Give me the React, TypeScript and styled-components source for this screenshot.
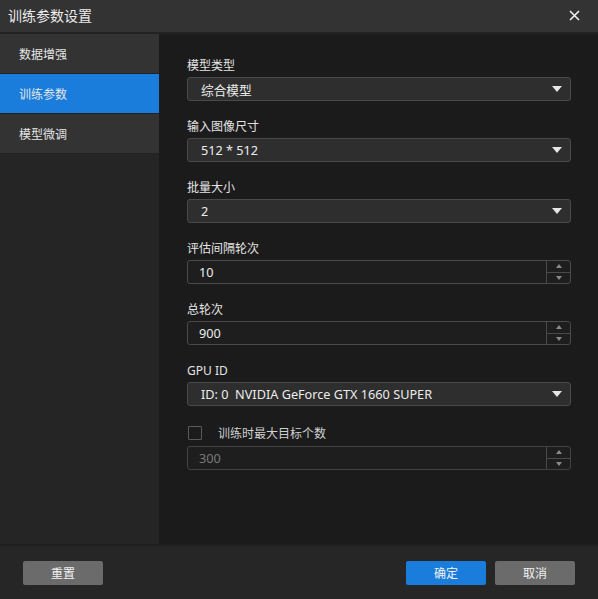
import React, { useState } from 'react';
import styled, { createGlobalStyle } from 'styled-components';

const GlobalStyle = createGlobalStyle`
  html, body {
    margin: 0;
    padding: 0;
    background: #1b1b1b;
  }
  * {
    box-sizing: border-box;
  }
`;

const Dialog = styled.div`
  width: 598px;
  height: 599px;
  display: flex;
  flex-direction: column;
  background: #1b1b1b;
  font-family: 'Noto Sans', 'Noto Sans CJK SC', sans-serif;
  color: #e2e2e2;
  overflow: hidden;
`;

const TitleBar = styled.div`
  height: 34px;
  flex-shrink: 0;
  display: flex;
  align-items: center;
  justify-content: space-between;
  padding: 0 18px 2px 8px;
  background: #333333;
  border-bottom: 2px solid #222222;
  font-size: 14px;
  color: #ececec;
`;

const CloseButton = styled.button`
  width: 12px;
  height: 12px;
  padding: 0;
  border: none;
  background: none;
  display: flex;
  align-items: center;
  justify-content: center;
  cursor: pointer;
`;

const Body = styled.div`
  flex: 1;
  display: flex;
  min-height: 0;
`;

const Sidebar = styled.div`
  width: 159px;
  flex-shrink: 0;
  display: flex;
  flex-direction: column;
  background: #252525;
`;

const NavItem = styled.div<{ $active?: boolean }>`
  height: 40px;
  display: flex;
  align-items: center;
  padding: 1px 0 0 19px;
  font-size: 12px;
  color: #e6e6e6;
  background: ${(p) => (p.$active ? '#1a7ddb' : '#333333')};
  border-bottom: 1px solid #222222;
  cursor: pointer;
`;

const Content = styled.div`
  flex: 1;
  display: flex;
  flex-direction: column;
  gap: 15px;
  padding: 21px 27px 0 28px;
`;

const Field = styled.div`
  display: flex;
  flex-direction: column;
  gap: 4px;
`;

const Label = styled.div`
  height: 18px;
  padding-top: 3px;
  line-height: 16px;
  font-size: 12px;
  color: #e4e4e4;
`;

const SelectBox = styled.div`
  height: 24px;
  display: flex;
  align-items: center;
  justify-content: space-between;
  padding: 0 8px 0 13px;
  background: #2e2e2e;
  border: 1px solid #4a4a4a;
  border-radius: 3px;
  font-size: 12.7px;
  color: #ececec;
  white-space: pre;
  cursor: pointer;
`;

const NumberBox = styled.div<{ $disabled?: boolean }>`
  height: 24px;
  display: flex;
  background: #1e1e1e;
  border: 1px solid ${(p) => (p.$disabled ? '#424242' : '#4a4a4a')};
  border-radius: 3px;
  font-size: 12.7px;
  color: ${(p) => (p.$disabled ? '#7a7a7a' : '#ececec')};
`;

const NumberValue = styled.div`
  flex: 1;
  display: flex;
  align-items: center;
  padding-left: 11px;
`;

const Spinner = styled.div`
  width: 24px;
  display: flex;
  flex-direction: column;
  border-left: 1px solid #4a4a4a;
`;

const SpinButton = styled.div<{ $down?: boolean }>`
  flex: 1;
  display: flex;
  align-items: center;
  justify-content: center;
  border-top: ${(p) => (p.$down ? '1px solid #4a4a4a' : 'none')};
`;

const CheckRow = styled.div`
  height: 18px;
  margin-top: 3px;
  display: flex;
  align-items: center;
  gap: 16px;
  padding-left: 1px;
  font-size: 12px;
  color: #d0d0d0;
`;

const CheckBox = styled.div`
  width: 14px;
  height: 14px;
  border: 1px solid #5a5a5a;
  border-radius: 1px;
`;

const Footer = styled.div`
  height: 55px;
  flex-shrink: 0;
  display: flex;
  align-items: flex-start;
  gap: 9px;
  padding: 15px 23px 0;
  background: #262626;
  border-top: 2px solid #1e1e1e;
`;

const Spacer = styled.div`
  flex: 1;
`;

const Button = styled.button<{ $primary?: boolean }>`
  width: 80px;
  height: 24px;
  border: none;
  border-radius: 2px;
  font-family: inherit;
  font-size: 12px;
  color: #f2f2f2;
  background: ${(p) => (p.$primary ? '#1a7ddb' : '#6b6b6b')};
  cursor: pointer;
`;

const Caret = () => (
  <svg width="10" height="6" viewBox="0 0 10 6">
    <path d="M0 0 H10 L5 6 Z" fill="#e6e6e6" />
  </svg>
);

const SpinArrow = ({ down }: { down?: boolean }) => (
  <svg width="6" height="4" viewBox="0 0 6 4">
    <path d={down ? 'M0 0 H6 L3 4 Z' : 'M0 4 H6 L3 0 Z'} fill="#8a8a8a" />
  </svg>
);

const NumberInput = ({ value, disabled }: { value: string; disabled?: boolean }) => (
  <NumberBox $disabled={disabled}>
    <NumberValue>{value}</NumberValue>
    <Spinner>
      <SpinButton>
        <SpinArrow />
      </SpinButton>
      <SpinButton $down>
        <SpinArrow down />
      </SpinButton>
    </Spinner>
  </NumberBox>
);

const Select = ({ value }: { value: string }) => (
  <SelectBox>
    <span>{value}</span>
    <Caret />
  </SelectBox>
);

const navItems = ['数据增强', '训练参数', '模型微调'];

const App: React.FC = () => {
  const [active, setActive] = useState(1);

  return (
    <Dialog>
      <GlobalStyle />
      <TitleBar>
        <span>训练参数设置</span>
        <CloseButton>
          <svg width="11" height="11" viewBox="0 0 11 11">
            <path d="M1 1 L10 10 M10 1 L1 10" stroke="#f0f0f0" strokeWidth="1.6" />
          </svg>
        </CloseButton>
      </TitleBar>
      <Body>
        <Sidebar>
          {navItems.map((item, i) => (
            <NavItem key={item} $active={i === active} onClick={() => setActive(i)}>
              {item}
            </NavItem>
          ))}
        </Sidebar>
        <Content>
          <Field>
            <Label>模型类型</Label>
            <Select value="综合模型" />
          </Field>
          <Field>
            <Label>输入图像尺寸</Label>
            <Select value="512 * 512" />
          </Field>
          <Field>
            <Label>批量大小</Label>
            <Select value="2" />
          </Field>
          <Field>
            <Label>评估间隔轮次</Label>
            <NumberInput value="10" />
          </Field>
          <Field>
            <Label>总轮次</Label>
            <NumberInput value="900" />
          </Field>
          <Field>
            <Label>GPU ID</Label>
            <Select value="ID: 0  NVIDIA GeForce GTX 1660 SUPER" />
          </Field>
          <Field>
            <CheckRow>
              <CheckBox />
              <span>训练时最大目标个数</span>
            </CheckRow>
            <NumberInput value="300" disabled />
          </Field>
        </Content>
      </Body>
      <Footer>
        <Button>重置</Button>
        <Spacer />
        <Button $primary>确定</Button>
        <Button>取消</Button>
      </Footer>
    </Dialog>
  );
};

export default App;
